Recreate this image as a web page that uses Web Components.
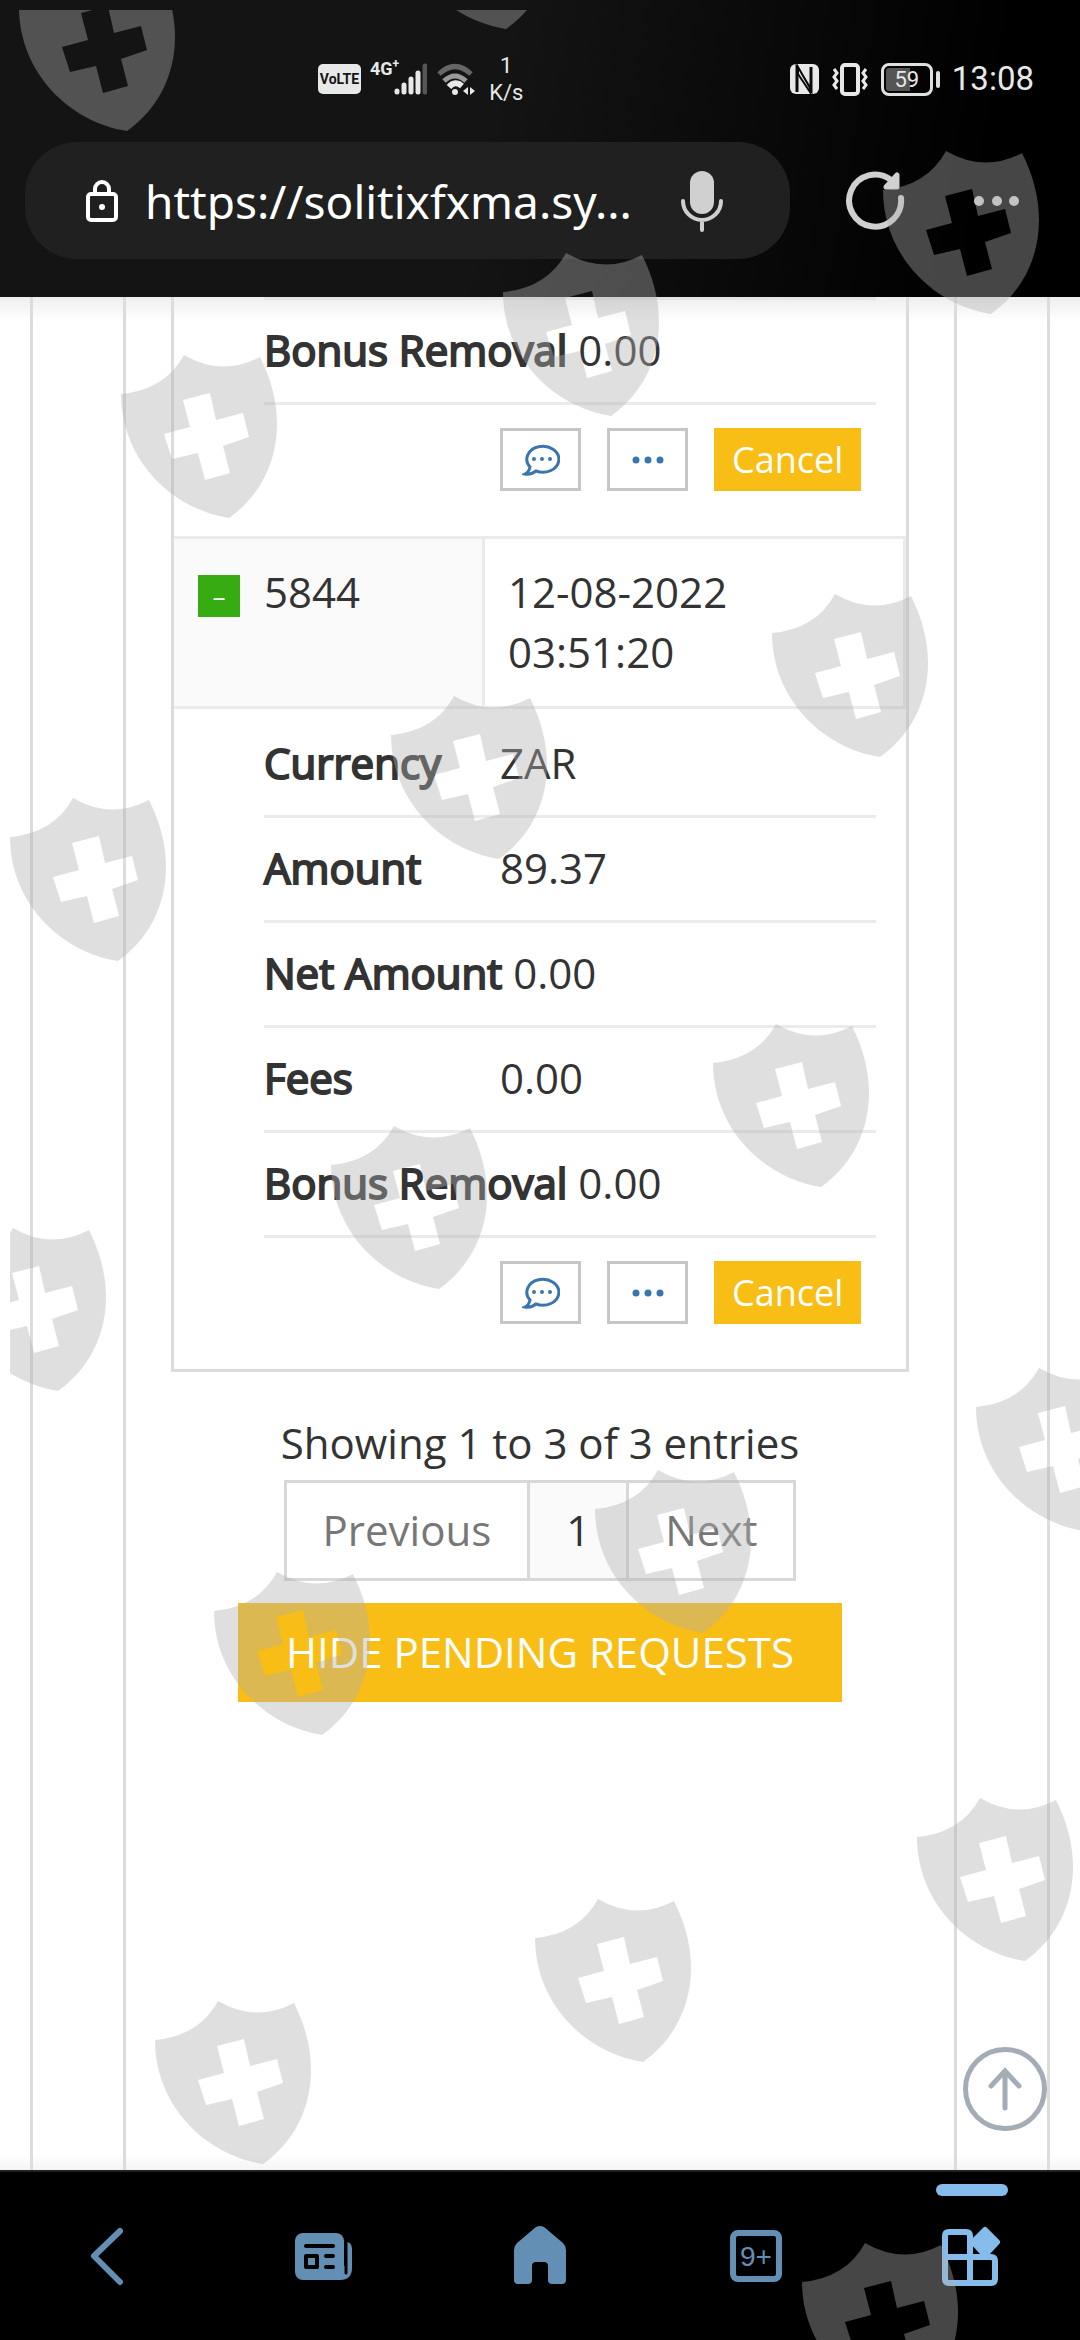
<!DOCTYPE html>
<html lang="en">
<head>
<meta charset="utf-8">
<meta name="viewport" content="width=device-width, initial-scale=1">
<title>Pending requests</title>
<style>
    body {
        margin: 0;
        background: #fff;
        color: #333;
        font: 42px/60px "Open Sans", "Noto Sans", sans-serif;
    }
</style>
</head>
<body>
<app-screen>
    <status-bar slot="top"></status-bar>
    <address-bar slot="top" url="https://solitixfxma.sy..."></address-bar>
    <request-table></request-table>
    <table-pager></table-pager>
    <bottom-nav slot="bottom"></bottom-nav>
</app-screen>
<shield-watermark></shield-watermark>

<script>
// Pending requests, the first one is scrolled partly out of view
const requests = [
    {
        details: [
            ['Bonus Removal', '0.00']
        ]
    },
    {
        id: '5844',
        date: '12-08-2022',
        time: '03:51:20',
        details: [
            ['Currency', 'ZAR'],
            ['Amount', '89.37'],
            ['Net Amount', '0.00'],
            ['Fees', '0.00'],
            ['Bonus Removal', '0.00']
        ]
    }
];

// Top left corner of every shield
const shields = [
    [9, -42], [388, -144],
    [873, 141], [493, 243], [111, 345],
    [762, 584], [381, 686], [0, 788],
    [703, 1014], [321, 1116], [-60, 1218],
    [966, 1358], [585, 1460], [204, 1562],
    [907, 1788], [525, 1889], [145, 1991],
    [792, 2233]
];

// Page frame: dark header, scrolled page, bottom bar
class AppScreen extends HTMLElement {
    constructor() {
        super();
        this.attachShadow({ mode: 'open' });
    }

    connectedCallback() {
        this.shadowRoot.innerHTML = `
            <style>
                :host {
                    display: flex;
                    flex-direction: column;
                    min-height: 100vh;
                }
                header {
                    background: linear-gradient(100deg, #141414 45%, #000 90%);
                    padding-bottom: 38px;
                }
                main {
                    flex: 1;
                    display: flex;
                    position: relative;
                    padding: 0 30px;
                    background: linear-gradient(#eee, #fff 24px, #fff calc(100% - 16px), #f4f4f4);
                }
                .outer {
                    flex: 1;
                    display: flex;
                    padding: 0 90px;
                    border: solid #dcdcdc;
                    border-width: 0 3px;
                }
                .inner {
                    flex: 1;
                    padding: 0 45px;
                    border: solid #dcdcdc;
                    border-width: 0 3px;
                }
                .to-top {
                    position: absolute;
                    right: 33px;
                    bottom: 39px;
                    width: 84px;
                    height: 84px;
                    padding: 0;
                    border: 5px solid #a4acb6;
                    border-radius: 50%;
                    background: #fff;
                }
                .to-top svg {
                    display: block;
                    margin: auto;
                }
            </style>
            <header><slot name="top"></slot></header>
            <main>
                <div class="outer"><div class="inner"><slot></slot></div></div>
                <button class="to-top" aria-label="Back to top">
                    <svg width="40" height="46" fill="none" stroke="#a4acb6" stroke-width="5" stroke-linecap="round">
                        <path d="M20 42V5M6 20L20 5L34 20"/>
                    </svg>
                </button>
            </main>
            <slot name="bottom"></slot>
        `;
    }
}

class StatusBar extends HTMLElement {
    constructor() {
        super();
        this.attachShadow({ mode: 'open' });
    }

    connectedCallback() {
        this.shadowRoot.innerHTML = `
            <style>
                :host {
                    display: flex;
                    justify-content: space-between;
                    align-items: center;
                    height: 126px;
                    padding: 16px 46px 0 318px;
                    color: #e8e8e8;
                    font-family: Roboto, sans-serif;
                }
                .group {
                    display: flex;
                    align-items: center;
                }
                .volte {
                    width: 43px;
                    border-radius: 5px;
                    background: #e8e8e8;
                    color: #141414;
                    font-size: 14px;
                    font-weight: 700;
                    line-height: 30px;
                    text-align: center;
                }
                .net {
                    align-self: flex-start;
                    margin-left: 9px;
                    font-size: 18px;
                    font-weight: 700;
                    line-height: 34px;
                }
                .net sup {
                    font-size: 12px;
                    line-height: 0;
                }
                .signal { margin-left: -5px; }
                .wifi { margin: 0 12px 0 10px; }
                .speed {
                    font-size: 22px;
                    line-height: 27px;
                    text-align: center;
                }
                .right { gap: 12px; }
                .battery {
                    display: flex;
                    align-items: center;
                    gap: 3px;
                }
                .battery b {
                    box-sizing: border-box;
                    width: 52px;
                    height: 33px;
                    border: 3px solid #e0e0e0;
                    border-radius: 8px;
                    background: linear-gradient(90deg, #555 58%, transparent 58%) content-box;
                    padding: 2px;
                    font-size: 22px;
                    font-weight: 400;
                    line-height: 23px;
                    text-align: center;
                }
                .battery i {
                    width: 4px;
                    height: 17px;
                    border-radius: 2px;
                    background: #e0e0e0;
                }
                .time {
                    font-size: 33px;
                    line-height: 36px;
                }
            </style>
            <div class="group">
                <span class="volte">VoLTE</span>
                <span class="net">4G<sup>+</sup></span>
                <svg class="signal" width="33" height="32">
                    <g stroke="#e8e8e8" stroke-width="5" stroke-linecap="round">
                        <path d="M3 28V29M10 22V29M17 16V29M24 10V29"/>
                        <path d="M31 3V29" stroke="#555"/>
                    </g>
                </svg>
                <svg class="wifi" width="40" height="33" fill="none" stroke-width="5">
                    <path d="M2 11Q18 -4 34 11" stroke="#666"/>
                    <path d="M7 18Q18 8 29 18" stroke="#999"/>
                    <path d="M12 24Q18 17 25 23" stroke="#e8e8e8" stroke-width="6"/>
                    <circle cx="18" cy="29" r="3" fill="#e8e8e8"/>
                    <path d="M31 24V32L26 28ZM33 24V32L38 28Z" fill="#e8e8e8"/>
                </svg>
                <span class="speed">1<br>K/s</span>
            </div>
            <div class="group right">
                <svg width="29" height="30">
                    <rect width="29" height="30" rx="6" fill="#e8e8e8"/>
                    <path d="M7 28V4L21 26V3" fill="none" stroke="#0a0a0a" stroke-width="3"/>
                    <path d="M8 3L20 24V28L8 10Z" fill="#e8e8e8" stroke="#0a0a0a" stroke-width="2"/>
                </svg>
                <svg width="38" height="33" fill="none" stroke="#e8e8e8" stroke-width="3">
                    <rect x="11" y="2" width="16" height="29" rx="3" stroke-width="4"/>
                    <path d="M3 6L6 10L3 14L6 18L3 22L6 26M35 6L32 10L35 14L32 18L35 22L32 26"/>
                </svg>
                <span class="battery"><b>59</b><i></i></span>
                <span class="time">13:08</span>
            </div>
        `;
    }
}

class AddressBar extends HTMLElement {
    constructor() {
        super();
        this.attachShadow({ mode: 'open' });
    }

    connectedCallback() {
        this.shadowRoot.innerHTML = `
            <style>
                :host {
                    display: flex;
                    align-items: center;
                    padding: 0 53px 0 25px;
                }
                .pill {
                    flex: 1;
                    display: flex;
                    align-items: center;
                    gap: 25px;
                    min-width: 0;
                    height: 117px;
                    padding: 0 58px 0 59px;
                    border-radius: 52px;
                    background: #202020;
                }
                input {
                    flex: 1;
                    min-width: 0;
                    padding: 0;
                    border: 0;
                    outline: 0;
                    background: none;
                    color: #fff;
                    font: 46px/60px "Noto Sans", sans-serif;
                }
                button {
                    padding: 0;
                    border: 0;
                    background: none;
                }
                svg {
                    display: block;
                    flex: none;
                }
                .reload { margin: 0 62px 0 55px; }
            </style>
            <div class="pill">
                <svg width="36" height="44" fill="none" stroke="#fff" stroke-width="4">
                    <rect x="4" y="15" width="28" height="26" rx="3"/>
                    <path d="M11 15V10a7 7 0 0 1 14 0V15"/>
                    <circle cx="18" cy="28" r="3" fill="#fff" stroke="none"/>
                </svg>
                <input type="text" aria-label="Address" value="${this.getAttribute('url')}">
                <button aria-label="Voice search">
                    <svg width="60" height="62" fill="none" stroke="#d0d0d0" stroke-width="4" stroke-linecap="round">
                        <rect x="18" y="1" width="24" height="43" rx="12" fill="#d0d0d0" stroke="none"/>
                        <path d="M11 31a19 19 0 0 0 38 0M30 50V60"/>
                    </svg>
                </button>
            </div>
            <button class="reload" aria-label="Reload">
                <svg width="60" height="62" fill="none" stroke="#d0d0d0" stroke-width="6" stroke-linecap="round">
                    <path d="M56 28A26 26 0 1 1 46 10"/>
                    <path d="M52 5V17H41Z" fill="#d0d0d0" stroke-linejoin="round" stroke-width="5"/>
                </svg>
            </button>
            <button aria-label="More options">
                <svg width="60" height="60" fill="#d0d0d0">
                    <circle cx="12" cy="30" r="5"/><circle cx="30" cy="30" r="5"/><circle cx="47" cy="30" r="5"/>
                </svg>
            </button>
        `;
    }
}

// Buttons under the details of one request
class RequestActions extends HTMLElement {
    constructor() {
        super();
        this.attachShadow({ mode: 'open' });
    }

    connectedCallback() {
        this.shadowRoot.innerHTML = `
            <style>
                :host {
                    display: flex;
                    gap: 26px;
                    padding: 23px 0 45px 236px;
                }
                button {
                    box-sizing: border-box;
                    width: 81px;
                    height: 63px;
                    padding: 0;
                    border: 3px solid #c6c6c6;
                    background: #fff;
                }
                svg {
                    display: block;
                    margin: auto;
                }
                .cancel {
                    width: auto;
                    padding: 0 18px;
                    border: 0;
                    background: #f8be15;
                    color: #fff;
                    font: 36px/60px "Open Sans", sans-serif;
                }
            </style>
            <button aria-label="Comments">
                <svg width="38" height="34" fill="#3a76ad">
                    <path d="M8 24A16 13 0 1 1 14 28Q9 32 3 31Q7 29 8 24Z" fill="none" stroke="#3a76ad" stroke-width="3"/>
                    <circle cx="12" cy="16" r="2"/><circle cx="20" cy="16" r="2"/><circle cx="28" cy="16" r="2"/>
                </svg>
            </button>
            <button aria-label="More">
                <svg width="32" height="10" fill="#3a76ad">
                    <circle cx="4" cy="5" r="3.5"/><circle cx="16" cy="5" r="3.5"/><circle cx="28" cy="5" r="3.5"/>
                </svg>
            </button>
            <button class="cancel">Cancel</button>
        `;
    }
}

class RequestTable extends HTMLElement {
    constructor() {
        super();
        this.attachShadow({ mode: 'open' });
    }

    connectedCallback() {
        this.render();
    }

    renderRequest(request) {
        const head = request.id ? `
            <tr class="head">
                <td class="id"><div><button aria-label="Collapse">–</button>${request.id}</div></td>
                <td class="date">${request.date}<br>${request.time}</td>
            </tr>` : '';
        const items = request.details.map(([label, value]) =>
            `<li><b>${label}</b> ${value}</li>`).join('');
        return `${head}
            <tr>
                <td colspan="2" class="${request.id ? 'details' : 'details cut'}">
                    <ul>${items}</ul>
                    <request-actions></request-actions>
                </td>
            </tr>`;
    }

    render() {
        this.shadowRoot.innerHTML = `
            <style>
                :host { display: block; }
                table {
                    width: 100%;
                    border: 3px solid #dcdcdc;
                    border-top: 0;
                    border-spacing: 0;
                    color: #333;
                    font: inherit;
                }
                td {
                    padding: 0;
                    vertical-align: top;
                }
                .head td {
                    padding: 23px 23px 24px;
                    border: solid #ebebeb;
                    border-width: 3px 3px 3px 0;
                }
                .head .id {
                    width: 311px;
                    box-sizing: border-box;
                    padding-left: 24px;
                    background: #fafafa;
                }
                .id div {
                    display: flex;
                    gap: 24px;
                }
                .id button {
                    width: 42px;
                    height: 42px;
                    margin-top: 13px;
                    padding: 0;
                    border: 0;
                    background: #37ac12;
                    color: #fff;
                    font: 26px/42px "Open Sans", sans-serif;
                }
                .details { padding: 24px 30px 0 90px; }
                .details.cut { padding-top: 0; }
                ul {
                    margin: 0;
                    padding: 0;
                    list-style: none;
                }
                li {
                    padding: 20px 0 22px;
                    border-bottom: 3px solid #ebebeb;
                }
                .details li:first-child { padding-top: 0; }
                .details.cut li:first-child {
                    padding-top: 20px;
                    border-top: 3px solid #e4e4e4;
                }
                b {
                    display: inline-block;
                    min-width: 225px;
                    font-weight: 400;
                    -webkit-text-stroke: 2px #333;
                }
            </style>
            <table><tbody>${requests.map(r => this.renderRequest(r)).join('')}</tbody></table>
        `;
    }
}

class TablePager extends HTMLElement {
    constructor() {
        super();
        this.attachShadow({ mode: 'open' });
    }

    connectedCallback() {
        this.shadowRoot.innerHTML = `
            <style>
                :host {
                    display: flex;
                    flex-direction: column;
                    align-items: center;
                    padding: 41px 0;
                }
                nav {
                    display: flex;
                    margin: 7px 0 22px;
                    border: 3px solid #d8d8d8;
                }
                button {
                    border: 0;
                    background: none;
                    font: inherit;
                }
                nav button {
                    padding: 17px 36px 18px;
                    color: #777;
                }
                nav button + button { border-left: 3px solid #d8d8d8; }
                nav .current {
                    background: #fafafa;
                    color: #333;
                }
                .hide {
                    padding: 19px 48px 20px;
                    background: #f8be15;
                    color: #fff;
                }
            </style>
            <span>Showing 1 to 3 of 3 entries</span>
            <nav>
                <button>Previous</button>
                <button class="current">1</button>
                <button>Next</button>
            </nav>
            <button class="hide">HIDE PENDING REQUESTS</button>
        `;
    }
}

class BottomNav extends HTMLElement {
    constructor() {
        super();
        this.attachShadow({ mode: 'open' });
    }

    connectedCallback() {
        this.shadowRoot.innerHTML = `
            <style>
                :host {
                    display: grid;
                    grid-template-columns: repeat(5, 1fr);
                    border-top: 2px solid #222;
                    background: #000;
                }
                button {
                    display: flex;
                    align-items: center;
                    justify-content: center;
                    position: relative;
                    height: 168px;
                    padding: 0;
                    border: 0;
                    background: none;
                    color: #648fb4;
                }
                .active { color: #86bcec; }
                .active::before {
                    content: "";
                    position: absolute;
                    top: 12px;
                    width: 72px;
                    height: 12px;
                    border-radius: 6px;
                    background: #86bcec;
                }
                .count {
                    box-sizing: border-box;
                    width: 52px;
                    height: 52px;
                    border: 6px solid;
                    border-radius: 8px;
                    font: 28px/42px "Liberation Sans", sans-serif;
                }
            </style>
            <button aria-label="Back">
                <svg width="60" height="60" fill="none" stroke="currentColor" stroke-width="6" stroke-linecap="round" stroke-linejoin="round">
                    <path d="M42 5L16 30L42 56"/>
                </svg>
            </button>
            <button aria-label="News">
                <svg width="60" height="60" fill="currentColor">
                    <path d="M53 16Q58 17 58 23V42Q58 54 46 54H20V40H53Z"/>
                    <rect x="1" y="7" width="49" height="47" rx="8"/>
                    <path d="M52 14V47" stroke="#000" stroke-width="3" stroke-linecap="round"/>
                    <path d="M12 20H39M32 30H39M32 41H39" stroke="#000" stroke-width="4" stroke-linecap="round"/>
                    <rect x="12" y="30" width="11" height="11" fill="none" stroke="#000" stroke-width="4" stroke-linejoin="round"/>
                </svg>
            </button>
            <button aria-label="Home">
                <svg width="60" height="60" fill="currentColor">
                    <path d="M26 1Q30 -1 34 1L53 17Q56 20 56 24V54Q56 58 52 58H42Q38 58 38 54V40Q38 36 34 36H26Q22 36 22 40V54Q22 58 18 58H8Q4 58 4 54V24Q4 20 7 17Z"/>
                </svg>
            </button>
            <button aria-label="Tabs"><span class="count">9+</span></button>
            <button class="active" aria-label="Apps">
                <svg width="60" height="60" fill="none" stroke="currentColor" stroke-width="6">
                    <path d="M28 57H7Q3 57 3 53V10Q3 6 7 6H24Q28 6 28 10V57H49Q53 57 53 53V35Q53 31 49 31H3"/>
                    <path d="M43 4L55 16L43 29L31 16Z" fill="currentColor" stroke-linejoin="round"/>
                </svg>
            </button>
        `;
    }
}

// Translucent shields laid over the whole screen
class ShieldWatermark extends HTMLElement {
    constructor() {
        super();
        this.attachShadow({ mode: 'open' });
    }

    connectedCallback() {
        this.shadowRoot.innerHTML = `
            <style>
                :host {
                    position: absolute;
                    inset: 10px 0 0 10px;
                    overflow: hidden;
                    pointer-events: none;
                }
                svg {
                    display: block;
                    width: 100%;
                    height: 100%;
                }
            </style>
            <svg aria-hidden="true" fill="#afafaf" fill-opacity="0.4">
                <defs>
                    <path id="shield" fill-rule="evenodd" d="M0 39Q44 35 63 0Q101 22 139 2C150 24 156 46 156 69C156 108 138 142 108 163C50 154 0 104 0 39Z
                        M62 45L89 38L95 65L122 58L128 82L102 91L109 118L84 125L77 98L51 104L43 79L69 72Z"/>
                </defs>
                ${shields.map(([x, y]) => `<use href="#shield" x="${x}" y="${y}"/>`).join('')}
            </svg>
        `;
    }
}

customElements.define('app-screen', AppScreen);
customElements.define('status-bar', StatusBar);
customElements.define('address-bar', AddressBar);
customElements.define('request-actions', RequestActions);
customElements.define('request-table', RequestTable);
customElements.define('table-pager', TablePager);
customElements.define('bottom-nav', BottomNav);
customElements.define('shield-watermark', ShieldWatermark);
</script>
</body>
</html>
